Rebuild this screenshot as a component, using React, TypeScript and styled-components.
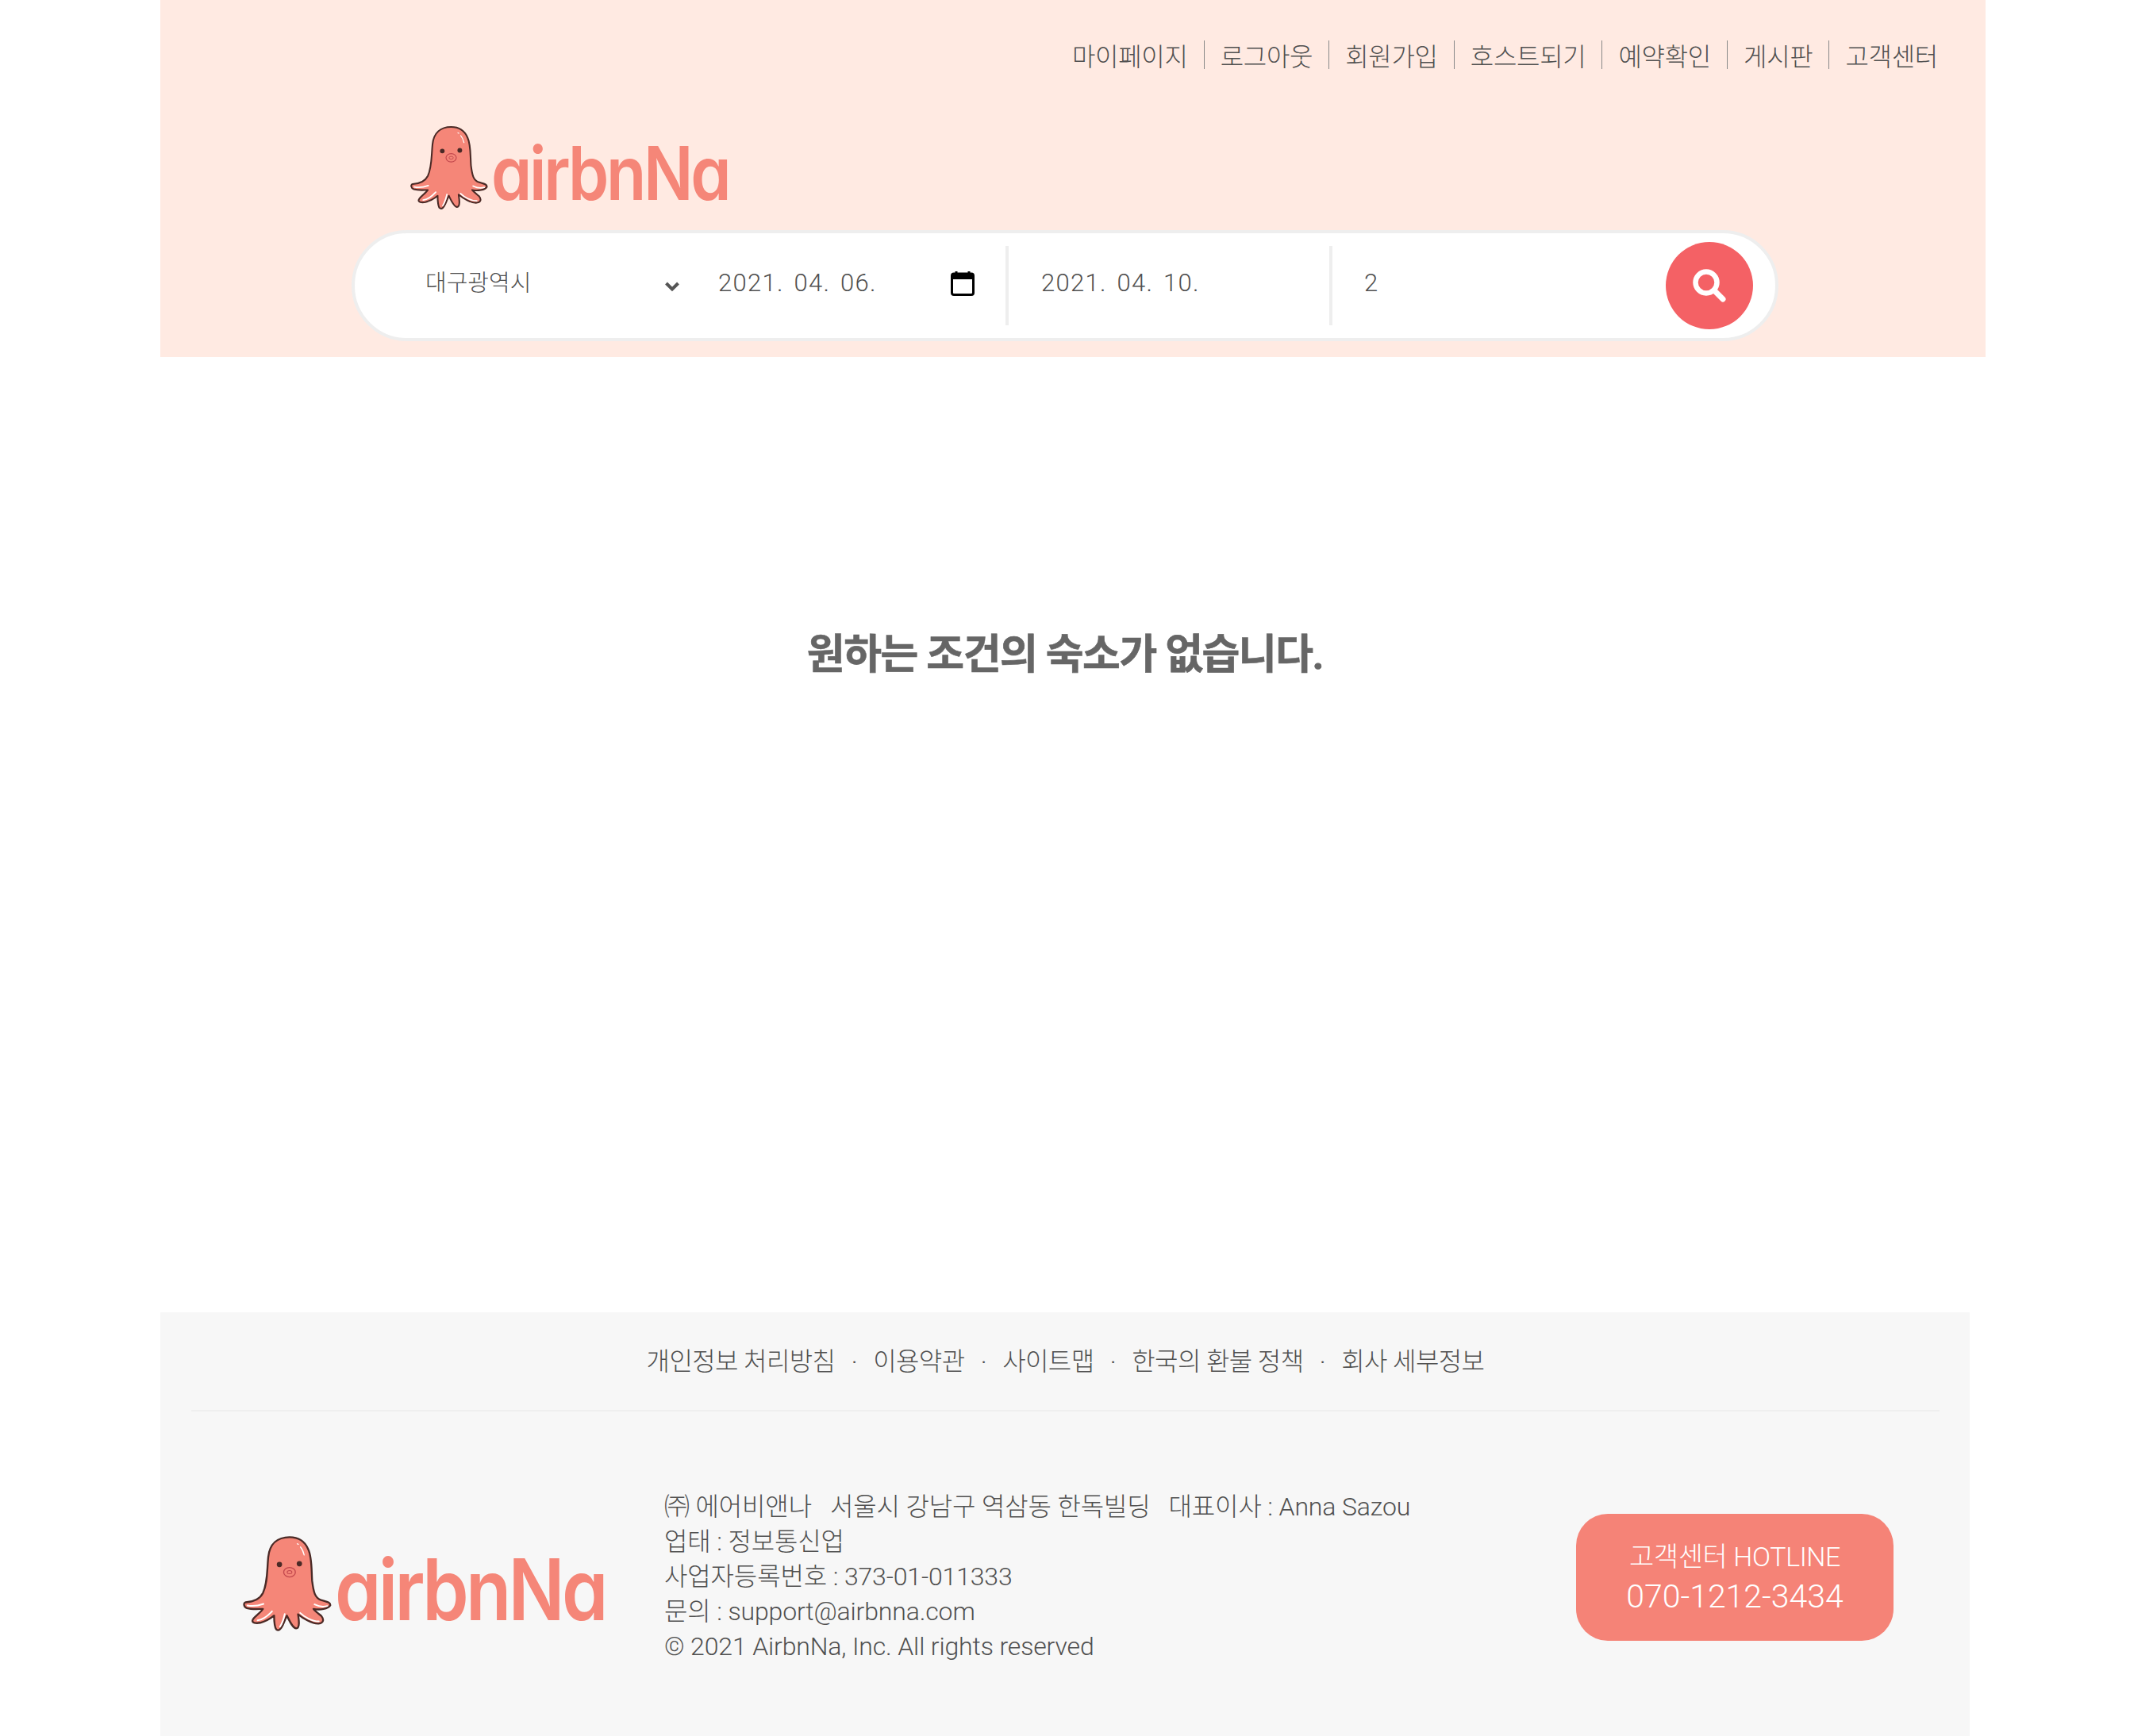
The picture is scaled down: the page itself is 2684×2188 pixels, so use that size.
import React from "react";
import styled, { createGlobalStyle } from "styled-components";

const Global = createGlobalStyle`
  html, body { margin: 0; padding: 0; background: #fff; }
  body { font-family: Roboto, "Noto Sans CJK KR", sans-serif; font-weight: 300; color: #505050; }
`;

const Page = styled.div`
  width: 2684px;
  height: 2188px;
  overflow: hidden;
  padding-left: 202px;
  box-sizing: border-box;
`;

const Header = styled.header`
  width: 2300px;
  height: 450px;
  background: #ffeae2;
  box-sizing: border-box;
  padding-top: 47px;
`;

const TopNav = styled.nav`
  height: 44px;
  display: flex;
  justify-content: flex-end;
  align-items: center;
  padding-right: 60px;
  font-size: 32px;
  letter-spacing: -0.3px;
`;

const TopLink = styled.a`
  display: flex;
  align-items: center;
  height: 36px;
  & + & {
    margin-left: 20px;
    padding-left: 20px;
    border-left: 1px solid #888;
  }
`;

const LogoRow = styled.div<{ $left: number }>`
  display: flex;
  align-items: flex-end;
  padding-left: ${(p) => p.$left}px;
`;

const HeaderLogo = styled(LogoRow)`
  margin-top: 68px;
  height: 106px;
`;

const Wordmark = styled.span<{ $size: number; $gap: number }>`
  display: inline-block;
  font-family: Inter, sans-serif;
  font-feature-settings: "cv11" 1;
  font-weight: 600;
  font-size: ${(p) => p.$size}px;
  line-height: 1;
  letter-spacing: -0.04em;
  color: #f58678;
  margin-left: ${(p) => p.$gap}px;
  transform: scaleX(0.875);
  transform-origin: left center;
`;

const SearchBar = styled.div`
  margin: 25px 0 0 241px;
  width: 1798px;
  height: 140px;
  box-sizing: border-box;
  border: 4px solid #eeeeee;
  border-radius: 70px;
  background: #fff;
  display: flex;
  align-items: center;
  font-size: 31px;
  letter-spacing: 1.3px;
  word-spacing: 4px;
`;

const Field = styled.div<{ $w: number; $pl: number; $divider?: boolean }>`
  width: ${(p) => p.$w}px;
  height: 100px;
  box-sizing: border-box;
  padding-left: ${(p) => p.$pl}px;
  display: flex;
  align-items: center;
  justify-content: space-between;
  padding-bottom: 7px;
  border-right: ${(p) => (p.$divider ? "4px solid #eeeeee" : "none")};
`;

const SelectText = styled.span`
  font-size: 29px;
  line-height: 44px;
  letter-spacing: 0;
  margin-top: 1px;
`;

const Chevron = styled.svg`
  width: 20px;
  height: 14px;
  margin-right: 48px;
  margin-top: 8px;
`;

const CalendarIcon = styled.svg`
  width: 30px;
  height: 32px;
  margin-right: 39px;
`;

const SearchButton = styled.button`
  width: 110px;
  height: 110px;
  border: 0;
  padding: 0;
  border-radius: 50%;
  background: #f46165;
  display: flex;
  align-items: center;
  justify-content: center;
  margin-left: auto;
  margin-right: 28px;
`;

const Main = styled.main`
  height: 1204px;
  width: 2280px;
  box-sizing: border-box;
  padding-top: 345px;
  text-align: center;
`;

const Message = styled.h2`
  margin: 0;
  font-size: 52px;
  line-height: 62px;
  font-weight: 700;
  letter-spacing: -1.5px;
  color: #666;
  -webkit-text-stroke: 0.6px #666;
`;

const Footer = styled.footer`
  width: 2280px;
  height: 534px;
  background: #f7f7f7;
  box-sizing: border-box;
  padding: 0 38px 0 39px;
`;

const FooterNav = styled.nav`
  height: 125px;
  box-sizing: border-box;
  border-bottom: 2px solid #efefef;
  display: flex;
  justify-content: center;
  align-items: center;
  font-size: 32px;
  letter-spacing: -0.6px;
  padding-bottom: 6px;
`;

const Dot = styled.span`
  margin: 0 21px;
  font-size: 24px;
  font-weight: 400;
  padding-top: 8px;
`;

const FooterBody = styled.div`
  display: flex;
  align-items: flex-start;
`;

const FooterLogo = styled(LogoRow)`
  margin-top: 156px;
  width: 596px;
  height: 122px;
  box-sizing: border-box;
`;

const Info = styled.div`
  margin-top: 98px;
  font-size: 32px;
  line-height: 44px;
  width: 1149px;
  letter-spacing: -0.15px;
  white-space: pre;
`;

const Hotline = styled.div`
  margin-top: 129px;
  width: 400px;
  height: 160px;
  box-sizing: border-box;
  padding-bottom: 3px;
  border-radius: 40px;
  background: #f58377;
  color: #fff;
  display: flex;
  flex-direction: column;
  align-items: center;
  justify-content: center;
`;

const HotlineTitle = styled.div`
  font-size: 34px;
  line-height: 50px;
  letter-spacing: -0.4px;
`;

const HotlineNumber = styled.div`
  font-size: 41px;
  line-height: 50px;
`;

const Octopus = ({ w, h }: { w: number; h: number }) => (
  <svg width={w} height={h} viewBox="75 108 333 364">
    <path
      d="M250 115 C205 115 175 140 170 190 C165 240 168 285 150 325 C140 345 115 358 85 360 C75 362 78 378 90 382 C110 388 135 385 150 385 C140 400 120 412 112 425 C105 438 125 440 140 437 C160 432 180 420 192 410 C192 430 192 450 200 462 C210 470 218 460 225 445 C230 435 235 420 240 410 C250 430 262 458 275 458 C290 458 285 425 282 405 C300 420 335 442 360 440 C378 438 380 425 370 412 C358 402 345 392 340 385 C365 390 395 385 403 372 C405 360 390 358 370 352 C345 345 340 320 335 280 C332 240 335 190 320 160 C305 125 280 115 250 115 Z"
      fill="#f58678"
      stroke="#4a2a26"
      strokeWidth="7"
      strokeLinejoin="round"
    />
    <g fill="none" stroke="#fff" strokeWidth="6" strokeLinecap="round">
      <path d="M92 372 C112 376 135 372 152 366" />
      <path d="M130 428 C150 425 168 412 184 394" />
      <path d="M214 452 C222 440 228 422 232 404" />
      <path d="M290 400 C305 415 335 432 360 432" />
      <path d="M344 368 C360 376 378 378 392 374" />
      <path d="M291 152 C298 160 302 170 305 182" strokeWidth="4" />
      <path d="M279 140 L283 142" strokeWidth="4" />
    </g>
    <circle cx="212" cy="218" r="10" fill="#4a2a26" />
    <circle cx="287" cy="215" r="10" fill="#4a2a26" />
    <ellipse cx="250" cy="247" rx="22" ry="18" fill="#f58678" stroke="#c2474d" strokeWidth="4" />
    <ellipse cx="250" cy="247" rx="9" ry="6" fill="none" stroke="#c2474d" strokeWidth="3" />
  </svg>
);

const topLinks = ["마이페이지", "로그아웃", "회원가입", "호스트되기", "예약확인", "게시판", "고객센터"];
const footerLinks = ["개인정보 처리방침", "이용약관", "사이트맵", "한국의 환불 정책", "회사 세부정보"];
const infoLines = [
  "㈜ 에어비앤나   서울시 강남구 역삼동 한독빌딩   대표이사 : Anna Sazou",
  "업태 : 정보통신업",
  "사업자등록번호 : 373-01-011333",
  "문의 : support@airbnna.com",
  "© 2021 AirbnNa, Inc. All rights reserved",
];

export default function App() {
  return (
    <Page>
      <Global />
      <Header>
        <TopNav>
          {topLinks.map((l) => (
            <TopLink key={l}>{l}</TopLink>
          ))}
        </TopNav>
        <HeaderLogo $left={315}>
          <Octopus w={98} h={107} />
          <Wordmark $size={94} $gap={4}>airbnNa</Wordmark>
        </HeaderLogo>
        <SearchBar>
          <Field $w={458} $pl={89}>
            <SelectText>대구광역시</SelectText>
            <Chevron viewBox="0 0 20 14">
              <path d="M2.5 3 L10 10.5 L17.5 3" fill="none" stroke="#555" strokeWidth="4" />
            </Chevron>
          </Field>
          <Field $w={366} $pl={0} $divider>
            <span>2021. 04. 06.</span>
            <CalendarIcon viewBox="0 0 30 32">
              <path d="M7 1 V5 M23 1 V5" stroke="#000" strokeWidth="3" />
              <rect x="1.5" y="4" width="27" height="26.5" rx="2.5" fill="#fff" stroke="#000" strokeWidth="3" />
              <rect x="1.5" y="4" width="27" height="7" fill="#000" />
            </CalendarIcon>
          </Field>
          <Field $w={408} $pl={41} $divider>
            <span>2021. 04. 10.</span>
          </Field>
          <Field $w={200} $pl={40}>
            <span>2</span>
          </Field>
          <SearchButton aria-label="검색">
            <svg width="42" height="42" viewBox="0 0 42 42">
              <circle cx="17" cy="17" r="13.5" fill="none" stroke="#fff" strokeWidth="6.5" />
              <path d="M27 27 L38 38" stroke="#fff" strokeWidth="7" strokeLinecap="round" />
            </svg>
          </SearchButton>
        </SearchBar>
      </Header>
      <Main>
        <Message>원하는 조건의 숙소가 없습니다.</Message>
      </Main>
      <Footer>
        <FooterNav>
          {footerLinks.map((l, i) => (
            <React.Fragment key={l}>
              {i > 0 && <Dot>·</Dot>}
              <a>{l}</a>
            </React.Fragment>
          ))}
        </FooterNav>
        <FooterBody>
          <FooterLogo $left={65}>
            <Octopus w={112} h={122} />
            <Wordmark $size={107} $gap={4}>airbnNa</Wordmark>
          </FooterLogo>
          <Info>
            {infoLines.map((l) => (
              <div key={l}>{l}</div>
            ))}
          </Info>
          <Hotline>
            <HotlineTitle>고객센터 HOTLINE</HotlineTitle>
            <HotlineNumber>070-1212-3434</HotlineNumber>
          </Hotline>
        </FooterBody>
      </Footer>
    </Page>
  );
}
